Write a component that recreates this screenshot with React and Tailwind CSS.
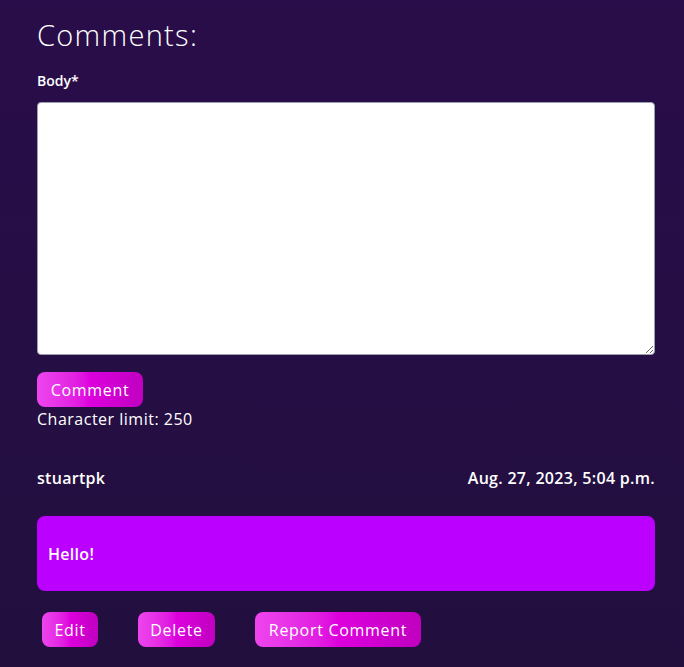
import React from 'react';

const font = { fontFamily: '"Open Sans", "Noto Sans", sans-serif' };

const GradBtn = ({ children, className = '' }) => (
    <button className={`h-[35px] rounded-lg bg-gradient-to-r from-[#ee44ee] via-[#dd00dd] to-[#c000c0] text-white text-[16px] tracking-[0.7px] ${className}`}>
        {children}
    </button>
);

export default function App() {
    return (
        <div className="min-h-[667px] w-full bg-gradient-to-b from-[#290d4a] to-[#220f3e] text-white" style={font}>
            <div className="px-[37px] pt-[18px] w-[692px]">
                <h2 className="text-[29px] font-light leading-[34px] tracking-[1.3px]">Comments:</h2>
                <label className="block mt-[19px] text-[14px] font-semibold leading-[20px]">Body*</label>
                <textarea className="block mt-[11px] w-[618px] h-[253px] bg-white rounded-sm border border-gray-400 text-black" />
                <GradBtn className="mt-[17px] w-[106px]">Comment</GradBtn>
                <p className="mt-[1px] text-[16px] font-medium leading-[22px] tracking-[0.5px]">Character limit: 250</p>

                <div className="mt-[37px] flex justify-between text-[16px] font-semibold leading-[22px] tracking-[0.3px] w-[618px]">
                    <span>stuartpk</span>
                    <span>Aug. 27, 2023, 5:04 p.m.</span>
                </div>

                <div className="mt-[27px] w-[618px] h-[75px] rounded-lg bg-[#bb00ff] flex items-center px-[11px] text-[16px] font-semibold tracking-[0.3px]">
                    Hello!
                </div>

                <div className="mt-[21px] flex pl-[5px]">
                    <GradBtn className="w-[56px]">Edit</GradBtn>
                    <GradBtn className="ml-[40px] w-[77px]">Delete</GradBtn>
                    <GradBtn className="ml-[40px] w-[166px]">Report Comment</GradBtn>
                </div>
            </div>
        </div>
    );
}
